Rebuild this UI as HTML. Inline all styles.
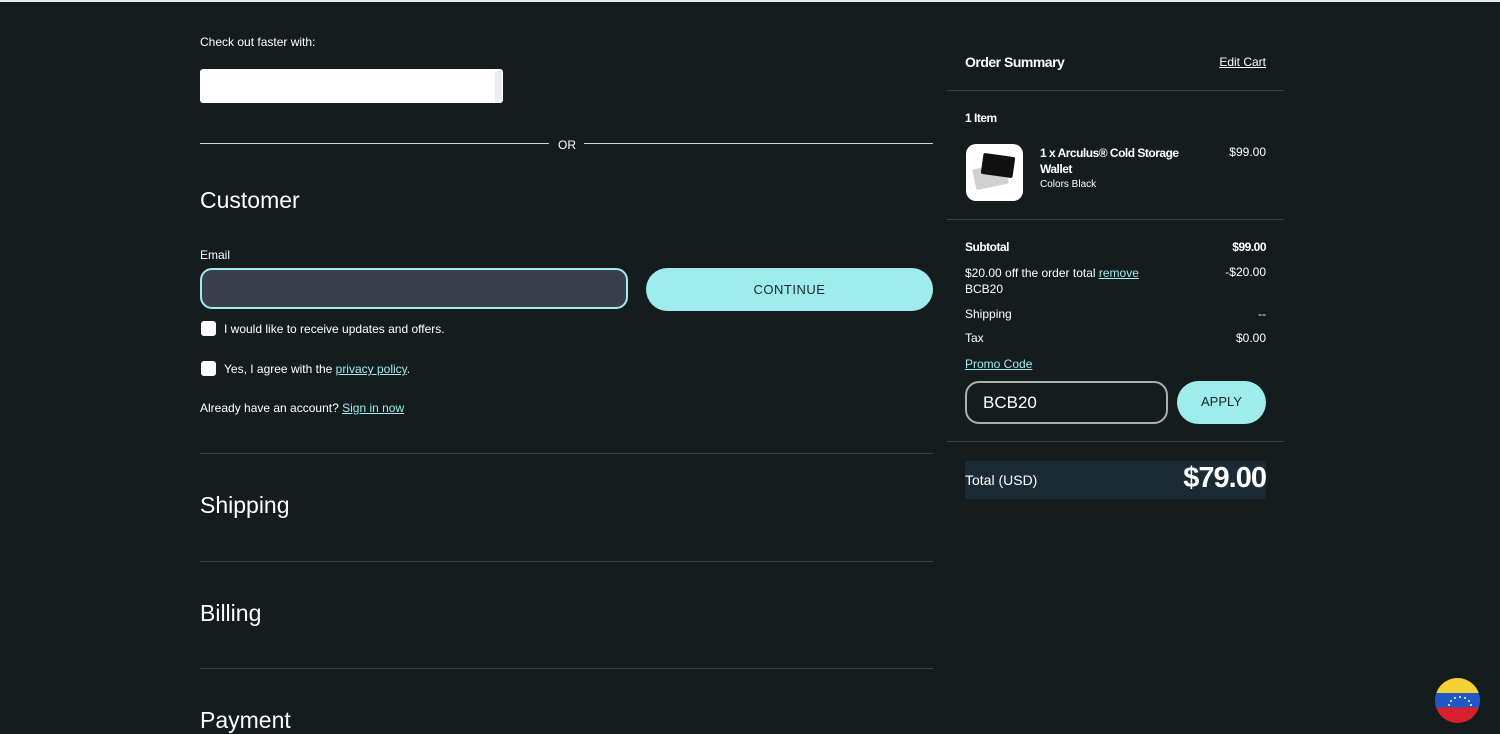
<!DOCTYPE html>
<html><head><meta charset="utf-8"><style>
*{box-sizing:border-box;margin:0;padding:0}
body{width:1500px;height:730px;overflow:hidden;background:#151c1d;color:#fff;font-family:"Liberation Sans",sans-serif;position:relative}
.a{position:absolute}
.s{font-size:12px}
.r{position:absolute;right:234px;font-size:12px;text-align:right}
.line{position:absolute;height:1px;background:#3a4242}
a{color:#9eecee;text-decoration:underline}
.cb{position:absolute;width:15px;height:15px;background:#fff;border-radius:3px}
h2{position:absolute;font-weight:400;font-size:23px;left:200px}
.d{position:absolute;width:2px;height:2px;background:#fff;border-radius:50%}
</style></head><body>
<div class="a" style="left:0;top:0;width:1500px;height:2px;background:#e8e8e8"></div>
<div class="a s" style="left:200px;top:35px">Check out faster with:</div>
<div class="a" style="left:200px;top:69px;width:303px;height:34px;background:#fff;border-radius:3px"></div>
<div class="a" style="left:495px;top:71px;width:7px;height:31px;background:#ececec"></div>
<div class="a" style="left:200px;top:143px;width:349px;height:1px;background:#cfd4d4"></div>
<div class="a s" style="left:558px;top:138px">OR</div>
<div class="a" style="left:584px;top:143px;width:349px;height:1px;background:#cfd4d4"></div>
<h2 style="top:187px">Customer</h2>
<div class="a s" style="left:200px;top:248px">Email</div>
<div class="a" style="left:200px;top:268px;width:428px;height:41px;background:#3b3f4c;border:2px solid #9eecee;border-radius:12px"></div>
<div class="a" style="left:646px;top:268px;width:287px;height:43px;background:#9eecee;border-radius:22px;color:#1b2626;font-size:13px;text-align:center;line-height:43px;letter-spacing:.5px">CONTINUE</div>
<div class="cb" style="left:201px;top:321px"></div>
<div class="a s" style="left:224px;top:322px">I would like to receive updates and offers.</div>
<div class="cb" style="left:201px;top:361px"></div>
<div class="a s" style="left:224px;top:362px">Yes, I agree with the <a>privacy policy</a>.</div>
<div class="a s" style="left:200px;top:401px">Already have an account? <a>Sign in now</a></div>
<div class="line" style="left:200px;top:453px;width:733px"></div>
<h2 style="top:492px">Shipping</h2>
<div class="line" style="left:200px;top:561px;width:733px"></div>
<h2 style="top:600px">Billing</h2>
<div class="line" style="left:200px;top:668px;width:733px"></div>
<h2 style="top:707px">Payment</h2>

<div class="a" style="left:965px;top:54px;font-size:14px;font-weight:700;letter-spacing:-.5px">Order Summary</div>
<div class="r" style="top:55px;text-decoration:underline">Edit Cart</div>
<div class="line" style="left:947px;top:90px;width:337px"></div>
<div class="a s" style="left:965px;top:111px;font-weight:700;letter-spacing:-.5px">1 Item</div>
<div class="a" style="left:966px;top:144px;width:57px;height:57px;background:#fff;border-radius:10px;overflow:hidden">
<div class="a" style="left:8px;top:22px;width:33px;height:21px;background:#d0d0d0;transform:rotate(-12deg);border-radius:2px"></div>
<div class="a" style="left:16px;top:11px;width:32px;height:21px;background:#111;transform:rotate(8deg);border-radius:2px"></div></div>
<div class="a s" style="left:1040px;top:145px;font-weight:700;letter-spacing:-.5px;line-height:16px;width:160px">1 x Arculus® Cold Storage Wallet</div>
<div class="a" style="left:1040px;top:179px;font-size:10px">Colors Black</div>
<div class="r" style="top:145px">$99.00</div>
<div class="line" style="left:947px;top:219px;width:337px"></div>
<div class="a s" style="left:965px;top:240px;font-weight:700;letter-spacing:-.5px">Subtotal</div>
<div class="r" style="top:240px;font-weight:700;letter-spacing:-.5px">$99.00</div>
<div class="a s" style="left:965px;top:265px;line-height:16px">$20.00 off the order total <a>remove</a><br>BCB20</div>
<div class="r" style="top:265px">-$20.00</div>
<div class="a s" style="left:965px;top:307px">Shipping</div>
<div class="r" style="top:307px">--</div>
<div class="a s" style="left:965px;top:331px">Tax</div>
<div class="r" style="top:331px">$0.00</div>
<div class="a s" style="left:965px;top:357px"><a>Promo Code</a></div>
<div class="a" style="left:965px;top:381px;width:203px;height:43px;border:2px solid #aab0b0;border-radius:14px;font-size:17px;padding-left:16px;line-height:39px">BCB20</div>
<div class="a" style="left:1177px;top:381px;width:89px;height:43px;background:#9eecee;border-radius:22px;color:#1b2626;font-size:13px;text-align:center;line-height:41px">APPLY</div>
<div class="line" style="left:947px;top:441px;width:337px"></div>
<div class="a" style="left:965px;top:461px;width:301px;height:38px;background:#1b2b36"></div>
<div class="a" style="left:965px;top:472px;font-size:14px">Total (USD)</div>
<div class="r" style="top:462px;font-size:29px;font-weight:700;letter-spacing:-1px">$79.00</div>

<div class="a" style="left:1435px;top:678px;width:45px;height:45px;border-radius:50%;overflow:hidden;background:linear-gradient(#f7d034 0 33%,#1f58c4 33% 66%,#d8202d 66%)">
<div class="d" style="left:13px;top:26px"></div><div class="d" style="left:15px;top:22px"></div><div class="d" style="left:19px;top:19px"></div><div class="d" style="left:24px;top:18px"></div><div class="d" style="left:29px;top:19px"></div><div class="d" style="left:33px;top:22px"></div><div class="d" style="left:35px;top:26px"></div><div class="d" style="left:10px;top:31px;display:none"></div>
</div>
</body></html>
